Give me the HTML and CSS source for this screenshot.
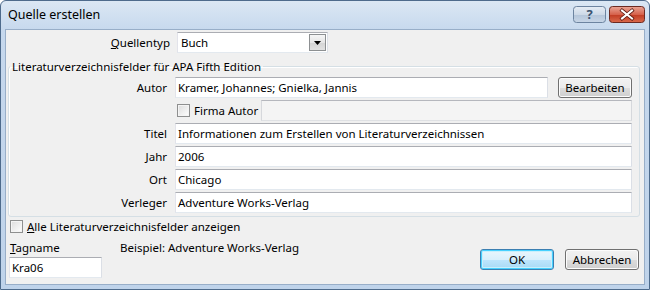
FILE: index.html
```html
<!DOCTYPE html>
<html lang="de">
<head>
    <meta charset="UTF-8">
    <title>Quelle erstellen</title>
    <link rel="stylesheet" href="styles.css">
</head>
<body>

    <div class="window">
        <div class="titlebar">
            <span class="title">Quelle erstellen</span>
            <div class="caption-buttons">
                <svg class="cap-btn" width="33" height="17" viewBox="0 0 33 17">
                    <defs>
                        <linearGradient id="helpGrad" x1="0" y1="0" x2="0" y2="1">
                            <stop offset="0" stop-color="#e6edf5"/>
                            <stop offset="0.5" stop-color="#cdd9e7"/>
                            <stop offset="0.51" stop-color="#b4c5d9"/>
                            <stop offset="1" stop-color="#c8d6e7"/>
                        </linearGradient>
                    </defs>
                    <rect x="0.5" y="0.5" width="32" height="16" rx="3" fill="url(#helpGrad)" stroke="#6d84a0"/>
                    <text x="16.5" y="13" text-anchor="middle" font-family="Noto Sans, sans-serif" font-size="13" font-weight="bold" fill="#3b5370">?</text>
                </svg>
                <svg class="cap-btn" width="36" height="17" viewBox="0 0 36 17">
                    <defs>
                        <linearGradient id="closeGrad" x1="0" y1="0" x2="0" y2="1">
                            <stop offset="0" stop-color="#e9a596"/>
                            <stop offset="0.5" stop-color="#d6624c"/>
                            <stop offset="0.51" stop-color="#c03a22"/>
                            <stop offset="1" stop-color="#da6a4c"/>
                        </linearGradient>
                    </defs>
                    <rect x="0.5" y="0.5" width="35" height="16" rx="3" fill="url(#closeGrad)" stroke="#6b2a22"/>
                    <path d="M13 4.5 L23 12.5 M23 4.5 L13 12.5" stroke="#5e1c14" stroke-width="3.6" stroke-linecap="square"/>
                    <path d="M13 4.5 L23 12.5 M23 4.5 L13 12.5" stroke="#ffffff" stroke-width="2" stroke-linecap="square"/>
                </svg>
            </div>
        </div>

        <div class="client">
            <div class="type-row">
                <label class="type-label"><u>Q</u>uellentyp</label>
                <div class="combo">
                    <span class="combo-text">Buch</span>
                    <span class="combo-btn">
                        <svg width="7" height="4" viewBox="0 0 7 4"><path d="M0 0 H7 L3.5 4 Z" fill="#000"/></svg>
                    </span>
                </div>
            </div>

            <fieldset class="group">
                <legend>Literaturverzeichnisfelder für APA Fifth Edition</legend>
                <div class="fields">
                    <label class="field-label">Autor</label>
                    <div class="field-line">
                        <div class="textbox grow">Kramer, Johannes; Gnielka, Jannis</div>
                        <button class="btn edit">Bearbeiten</button>
                    </div>

                    <span></span>
                    <div class="field-line">
                        <label class="check firma"><span class="box"></span><span>Firma Autor</span></label>
                        <div class="textbox disabled grow"></div>
                    </div>

                    <label class="field-label">Titel</label>
                    <div class="textbox">Informationen zum Erstellen von Literaturverzeichnissen</div>

                    <label class="field-label">Jahr</label>
                    <div class="textbox">2006</div>

                    <label class="field-label">Ort</label>
                    <div class="textbox">Chicago</div>

                    <label class="field-label">Verleger</label>
                    <div class="textbox">Adventure Works-Verlag</div>
                </div>
            </fieldset>

            <label class="check show-all"><span class="box"></span><span><u>A</u>lle Literaturverzeichnisfelder anzeigen</span></label>

            <div class="bottom">
                <div class="tag">
                    <label class="tag-label"><u>T</u>agname</label>
                    <div class="textbox tagbox">Kra06</div>
                </div>
                <div class="example">Beispiel: Adventure Works-Verlag</div>
                <div class="actions">
                    <button class="btn default">OK</button>
                    <button class="btn">Abbrechen</button>
                </div>
            </div>
        </div>
    </div>

</body>
</html>
```

FILE: styles.css
```css
body {
    margin: 0;
    padding: 0;
    background-color: #ffffff;
    font-family: "Noto Sans", "Open Sans", sans-serif;
    font-size: 11.5px;
    line-height: 15px;
    color: #000;
}
.window {
    width: 650px;
    height: 290px;
    box-sizing: border-box;
    border: 1px solid #4e6b8c;
    border-radius: 6px 6px 0 0;
    background: linear-gradient(to bottom, #dbe7f4 0px, #c6d8ed 30px, #bfd3ea 100%);
    padding: 0 4px 4px 4px;
    display: flex;
    flex-direction: column;
}
.titlebar {
    height: 28px;
    display: flex;
    align-items: center;
    justify-content: space-between;
}
.title {
    font-size: 12.5px;
    padding-left: 3px;
    margin-top: -1px;
}
.caption-buttons {
    display: flex;
    gap: 3px;
    align-self: flex-start;
    margin-top: 5px;
}
.cap-btn {
    display: block;
}
.client {
    flex: 1;
    background-color: #f0f0f0;
    border: 1px solid #98aec8;
    display: flex;
    flex-direction: column;
}
.type-row {
    display: grid;
    grid-template-columns: 164px 151px;
    column-gap: 7px;
    align-items: center;
    margin-top: 2px;
}
.type-label {
    text-align: right;
}
.combo {
    height: 21px;
    box-sizing: border-box;
    border: 1px solid;
    border-color: #abadb3 #dbdfe6 #e3e9ef #e2e3ea;
    background: #fff;
    display: flex;
    align-items: center;
    justify-content: space-between;
    padding: 0 1px 0 3px;
}
.combo-btn {
    width: 17px;
    height: 17px;
    box-sizing: border-box;
    border: 1px solid #8d9092;
    background: linear-gradient(to bottom, #f6f6f6 0%, #e6e6e6 50%, #d4d4d4 51%, #e2e2e2 100%);
    display: flex;
    align-items: center;
    justify-content: center;
}
.group {
    margin: 6px 4px 0 2px;
    padding: 3px 7px 3px 0;
    border: 1px solid #d5dfe5;
    border-radius: 3px;
    box-shadow: inset 1px 1px 0 #fff;
}
.group legend {
    padding: 0 2px;
    margin-left: 1px;
}
.fields {
    display: grid;
    grid-template-columns: 158px 1fr;
    grid-auto-rows: 21px;
    column-gap: 8px;
    row-gap: 2px;
    align-items: center;
}
.field-label {
    text-align: right;
}
.field-line {
    display: flex;
    align-items: center;
    gap: 10px;
}
.textbox {
    height: 21px;
    box-sizing: border-box;
    border: 1px solid;
    border-color: #abadb3 #dbdfe6 #e3e9ef #e2e3ea;
    background: #fff;
    padding: 0 2px;
    line-height: 19px;
    white-space: nowrap;
}
.grow {
    flex: 1;
}
.disabled {
    background: #f4f4f4;
    border-color: #b5b7bd #d6d8dc #dfe1e4 #d6d8dc;
}
.btn {
    font-family: inherit;
    font-size: 11.5px;
    width: 74px;
    height: 21px;
    padding: 0;
    border: 1px solid #707070;
    border-radius: 3px;
    background: linear-gradient(to bottom, #f2f2f2 0%, #ebebeb 50%, #dddddd 51%, #cfcfcf 100%);
    box-shadow: inset 0 0 0 1px #fcfcfc;
    color: #000;
}
.default {
    border-color: #3c7fb1;
    box-shadow: inset 0 0 0 1px #48d1ff, inset 0 0 0 2px #c9f0fc;
    background: linear-gradient(to bottom, #eaf6fd 0%, #d9f0fc 50%, #bee6fd 51%, #a7d9f5 100%);
}
.check {
    display: flex;
    align-items: center;
    gap: 4px;
    white-space: nowrap;
}
.box {
    flex: none;
    width: 13px;
    height: 13px;
    box-sizing: border-box;
    border: 1px solid #8e8f8f;
    background: linear-gradient(135deg, #dcdcdc 0%, #f4f4f4 70%, #ffffff 100%);
    box-shadow: inset 0 0 0 1px #f4f4f4;
}
.firma {
    flex: none;
    margin-left: 2px;
    width: 74px;
}
.show-all {
    margin: 2px 0 0 4px;
}
.bottom {
    display: flex;
    align-items: flex-start;
    margin-top: 6px;
    padding: 0 5px 0 3px;
}
.tag {
    display: flex;
    flex-direction: column;
    width: 111px;
}
.tag-label {
    margin-left: 1px;
}
.tagbox {
    width: 93px;
    margin-top: 2px;
}
.example {
    flex: 1;
}
.actions {
    display: flex;
    gap: 11px;
    margin-top: 9px;
}
```
